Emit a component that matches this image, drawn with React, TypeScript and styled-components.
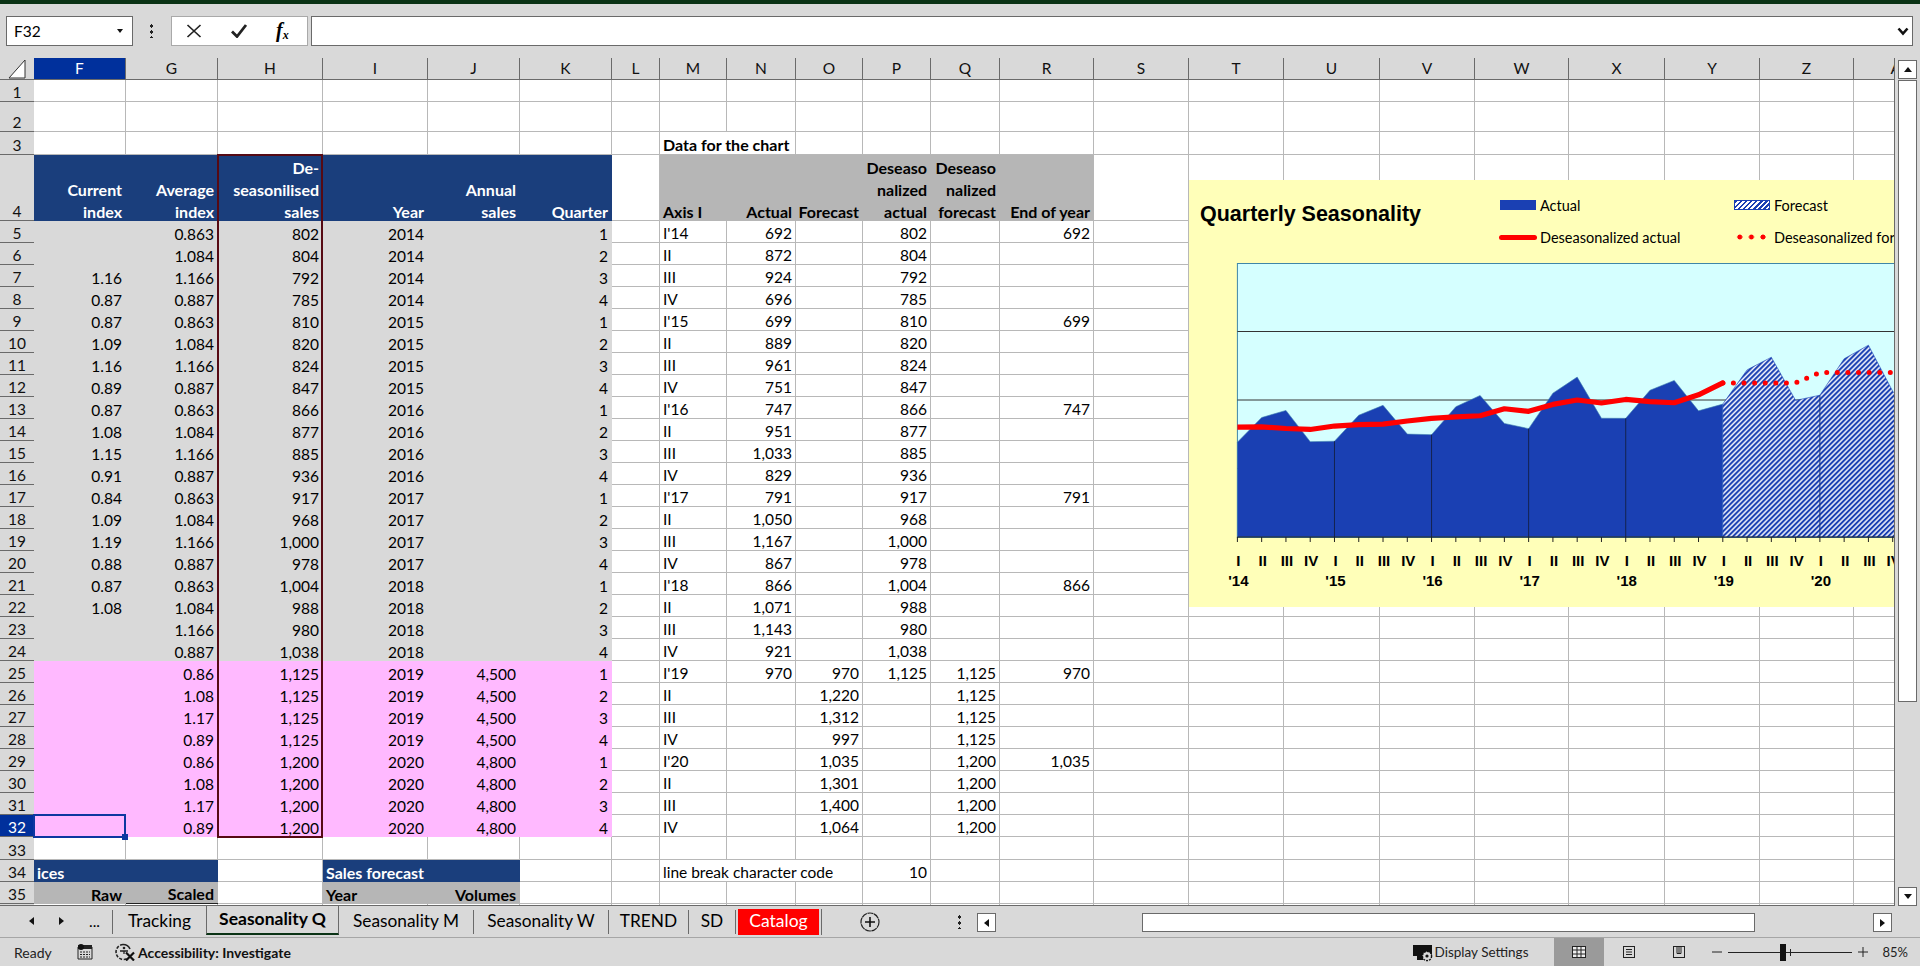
import type { ComponentProps } from "react";
import styled, { createGlobalStyle } from "styled-components";

const GlobalStyle = createGlobalStyle`
  html, body {
    margin: 0;
    padding: 0;
    width: 1920px;
    height: 966px;
    overflow: hidden;
    background: #d9d9d9;
  }
`;

const Page = styled.div`
  width: 1920px;
  height: 966px;
  display: flex;
  flex-direction: column;
  overflow: hidden;
  font-family: Lato, "Open Sans", sans-serif;
  color: #000;
`;

const TitleEdge = styled.div`
  height: 4px;
  background: #0a3315;
`;

/* formula bar */
const FormulaBar = styled.div`
  height: 54px;
  box-sizing: border-box;
  padding: 12px 7px 0 6px;
  display: flex;
  align-items: flex-start;
`;

const NameBox = styled.div`
  width: 127px;
  height: 30px;
  box-sizing: border-box;
  background: #fff;
  border: 1px solid #6a6a6a;
  display: flex;
  align-items: center;
  justify-content: space-between;
  padding: 0 9px 0 7px;
  font-size: 15.5px;
`;

const Handle = styled.div`
  width: 3px;
  height: 15px;
  background-image: radial-gradient(circle, #222 1.6px, transparent 1.7px);
  background-size: 3px 6px;
`;

const FormulaHandle = styled(Handle)`
  margin: 7px 18px 0 17px;
`;

const ButtonGroup = styled.div`
  width: 137px;
  height: 30px;
  box-sizing: border-box;
  background: #fff;
  border: 1px solid #a9a9a9;
  display: flex;
  align-items: center;
  gap: 28px;
  padding-left: 14px;
  margin-right: 3px;
`;

const FxLabel = styled.span`
  font-family: "Liberation Serif", serif;
  font-style: italic;
  font-weight: 700;
  font-size: 20px;
  & > sub {
    font-size: 12px;
    vertical-align: -2px;
  }
`;

const FormulaInput = styled.div`
  flex: 1;
  height: 30px;
  box-sizing: border-box;
  background: #fff;
  border: 1px solid #6a6a6a;
  display: flex;
  align-items: center;
  justify-content: flex-end;
  padding-right: 3px;
`;

/* sheet */
const Workspace = styled.div`
  height: 848px;
  display: flex;
`;

const Sheet = styled.div`
  position: relative;
  width: 1895px;
  box-sizing: border-box;
  overflow: hidden;
  border-right: 1px solid #6a6a6a;
  border-bottom: 1px solid #6a6a6a;
  background: #fff;
  display: grid;
  grid-template-columns: 34px 92px 92px 105px 105px 92px 92px 48px 67px 69px 67px 68px 69px 94px 95px 95px 96px 95px 94px 96px 95px 94px 95px;
  grid-template-rows: 22px 22px 30px 23px 66px repeat(28, 22px) 23px 22px 22px 22px;
  align-content: start;
  font-size: 15.5px;
`;

const Corner = styled.div`
  background: #d9d9d9;
  border-bottom: 1px solid #6a6a6a;
  display: flex;
  align-items: center;
  justify-content: center;
`;

const ColHeader = styled.div<{ $selected?: boolean }>`
  box-sizing: border-box;
  background: ${(p) => (p.$selected ? "#00309c" : "#d9d9d9")};
  color: ${(p) => (p.$selected ? "#fff" : "#111")};
  border-right: 1px solid #6a6a6a;
  border-bottom: 1px solid #6a6a6a;
  display: flex;
  align-items: center;
  justify-content: center;
  line-height: 21px;
`;

const RowHeader = styled.div<{ $selected?: boolean }>`
  box-sizing: border-box;
  background: ${(p) => (p.$selected ? "#00309c" : "#d9d9d9")};
  color: ${(p) => (p.$selected ? "#fff" : "#111")};
  border-bottom: 1px solid #6a6a6a;
  display: flex;
  align-items: flex-end;
  justify-content: center;
  line-height: 18px;
`;

type Tone = "plain" | "gray" | "pink" | "blue" | "silver";

const toneBg: Record<Tone, string> = {
  plain: "#fff",
  gray: "#d9d9d9",
  pink: "#ffb9ff",
  blue: "#1a3e7c",
  silver: "#b6b6b6",
};

const CellBox = styled.div<{
  $tone?: Tone;
  $left?: boolean;
  $bold?: boolean;
  $span?: number;
  $rule?: boolean;
}>`
  box-sizing: border-box;
  min-width: 0;
  grid-column: span ${(p) => p.$span ?? 1};
  background: ${(p) => toneBg[p.$tone ?? "plain"]};
  color: ${(p) => (p.$tone === "blue" ? "#fff" : "#000")};
  font-weight: ${(p) => (p.$bold ? 700 : 400)};
  font-size: ${(p) => (p.$bold ? "16px" : "15.5px")};
  border-right: ${(p) => (p.$tone && p.$tone !== "plain" ? "0" : "1px solid #b8b8b8")};
  border-bottom: ${(p) =>
    p.$rule ? "1px solid #222" : p.$tone && p.$tone !== "plain" ? "0" : "1px solid #b8b8b8"};
  display: flex;
  align-items: flex-end;
  justify-content: ${(p) => (p.$left ? "flex-start" : "flex-end")};
  text-align: ${(p) => (p.$left ? "left" : "right")};
  padding: ${(p) => (p.$left ? "0 0 0 3px" : p.$tone && p.$tone !== "plain" ? "0 4px 0 0" : "0 3px 0 0")};
  line-height: 22px;
  white-space: pre;
`;

const Value = styled.span`
  position: relative;
  top: 2px;
`;

const Cell = ({ children, ...rest }: ComponentProps<typeof CellBox>) => (
  <CellBox {...rest}>
    <Value>{children}</Value>
  </CellBox>
);

const ColumnOutline = styled.div`
  position: absolute;
  grid-column: 4 / 5;
  grid-row: 5 / 34;
  inset: -1px 0 -1px -1px;
  border: 2px solid #560a14;
  pointer-events: none;
`;

const ActiveCell = styled.div`
  position: absolute;
  grid-column: 2 / 3;
  grid-row: 33 / 34;
  inset: -1px 0 -1px -1px;
  border: 2.5px solid #0d37a0;
  pointer-events: none;
  &::after {
    content: "";
    position: absolute;
    right: -4px;
    bottom: -4px;
    width: 6px;
    height: 6px;
    background: #0d37a0;
  }
`;

/* chart that floats over the sheet */
const ChartPanel = styled.div`
  position: absolute;
  left: 1189px;
  top: 122px;
  width: 800px;
  height: 427px;
  background: #ffffb9;
`;

const ChartHeader = styled.div`
  height: 83px;
  display: flex;
  align-items: flex-start;
`;

const ChartTitle = styled.div`
  width: 300px;
  flex: none;
  padding: 20px 0 0 11px;
  box-sizing: border-box;
  margin-right: 11px;
  font-family: "Liberation Sans", Arial, sans-serif;
  font-weight: 700;
  font-size: 21.5px;
  line-height: 28px;
  white-space: nowrap;
`;

const Legend = styled.div`
  padding-top: 9px;
  display: grid;
  grid-template-columns: 234px 240px;
  grid-auto-rows: 32px;
`;

const LegendItem = styled.div`
  display: flex;
  align-items: center;
  gap: 4px;
  font-size: 14.5px;
  white-space: nowrap;
`;

const AreaSwatch = styled.div<{ $hatch?: boolean }>`
  width: 36px;
  height: 10px;
  box-sizing: border-box;
  border: 1px solid #1a40b3;
  background: ${(p) =>
    p.$hatch
      ? "repeating-linear-gradient(135deg, #1a40b3 0 2.1px, #fff 2.1px 3.54px)"
      : "#1a40b3"};
`;

const LineSwatch = styled.div`
  width: 38px;
  height: 5px;
  margin-left: -1px;
  margin-right: -1px;
  border-radius: 3px;
  background: #ff0000;
`;

const DotSwatch = styled.div`
  width: 36px;
  height: 6px;
  background-image: radial-gradient(circle, #ff0000 2.3px, transparent 2.7px);
  background-size: 11.6px 6px;
`;

const PlotSvg = styled.svg`
  display: block;
`;

const AxisText = styled.text`
  font-family: "Liberation Sans", Arial, sans-serif;
  font-weight: 700;
  font-size: 15px;
  text-anchor: middle;
  fill: #000;
`;

/* vertical scrollbar */
const VScroll = styled.div`
  flex: 1;
  box-sizing: border-box;
  padding: 2px 3px 0 3px;
  display: flex;
  flex-direction: column;
  align-items: stretch;
`;

const ScrollButton = styled.div`
  width: 19px;
  height: 19px;
  box-sizing: border-box;
  background: #fff;
  border: 1px solid #6a6a6a;
  display: flex;
  align-items: center;
  justify-content: center;
  flex: none;
`;

const VThumb = styled.div`
  height: 622px;
  margin-top: 1px;
  box-sizing: border-box;
  background: #fff;
  border: 1px solid #6a6a6a;
`;

const VSpacer = styled.div`
  flex: 1;
`;

const Triangle = styled.div<{ $dir: "up" | "down" | "left" | "right"; $size?: number }>`
  width: 0;
  height: 0;
  ${(p) => {
    const s = p.$size ?? 4;
    const side = `${s}px solid transparent`;
    const solid = `${s + 1}px solid #111`;
    if (p.$dir === "up") return `border-left:${side};border-right:${side};border-bottom:${solid};`;
    if (p.$dir === "down") return `border-left:${side};border-right:${side};border-top:${solid};`;
    if (p.$dir === "left") return `border-top:${side};border-bottom:${side};border-right:${solid};`;
    return `border-top:${side};border-bottom:${side};border-left:${solid};`;
  }}
`;

/* sheet tabs */
const TabBar = styled.div`
  height: 32px;
  box-sizing: border-box;
  border-bottom: 1px solid #a6a6a6;
  display: flex;
  align-items: flex-start;
`;

const TabNav = styled.div`
  width: 112px;
  height: 30px;
  box-sizing: border-box;
  padding: 0 12px 0 29px;
  display: flex;
  align-items: center;
  justify-content: space-between;
  font-size: 15.5px;
`;

const Tabs = styled.div`
  display: flex;
  align-items: flex-start;
  height: 31px;
`;

const Tab = styled.div<{ $w: number; $active?: boolean; $red?: boolean }>`
  width: ${(p) => p.$w}px;
  box-sizing: border-box;
  height: ${(p) => (p.$active ? "29px" : p.$red ? "26px" : "24px")};
  margin-top: ${(p) => (p.$active ? "0" : p.$red ? "3px" : "4px")};
  display: flex;
  align-items: center;
  justify-content: center;
  padding-bottom: ${(p) => (p.$active ? "2px" : p.$red ? "4px" : "4px")};
  font-size: ${(p) => (p.$active || p.$red ? "17.5px" : "17.3px")};
  font-weight: ${(p) => (p.$active ? 700 : 400)};
  white-space: nowrap;
  background: ${(p) => (p.$red ? "#ff0000" : "#d9d9d9")};
  color: ${(p) => (p.$red ? "#fff" : "#000")};
  ${(p) =>
    p.$active
      ? "border-left: 1px solid #6a6a6a; border-right: 1px solid #6a6a6a; border-bottom: 2px solid #0a3315; margin-left: -1px;"
      : p.$red
      ? "margin-left: 2px; box-shadow: 2px 0 0 #d9d9d9, 3px 0 0 #6a6a6a;"
      : "border-right: 1px solid #6a6a6a;"}
`;

const FirstTabEdge = styled.div`
  width: 1px;
  height: 24px;
  margin-top: 4px;
  background: #6a6a6a;
`;

const AddSheet = styled.div`
  margin: 6px 0 0 41px;
  width: 20px;
  height: 20px;
  flex: none;
`;

const TabHandle = styled(Handle)`
  margin: 8px 16px 0 78px;
  flex: none;
`;

const HScroll = styled.div`
  display: flex;
  align-items: flex-start;
  padding-top: 7px;
`;

const HTrack = styled.div`
  width: 877px;
  height: 19px;
  padding-left: 146px;
  box-sizing: border-box;
`;

const HThumb = styled.div`
  width: 613px;
  height: 19px;
  box-sizing: border-box;
  background: #fff;
  border: 1px solid #6a6a6a;
`;

/* status bar */
const StatusBar = styled.div`
  height: 28px;
  display: flex;
  align-items: center;
  font-size: 14px;
  color: #222;
`;

const Ready = styled.span`
  margin-left: 14px;
  width: 63px;
`;

const StatusIcon = styled.svg`
  flex: none;
  display: block;
`;

const AccessIcon = styled(StatusIcon)`
  margin-left: 21px;
`;

const AccessText = styled.span`
  margin-left: 2px;
  font-weight: 700;
  color: #111;
`;

const StatusRight = styled.div`
  margin-left: auto;
  height: 28px;
  display: flex;
  align-items: center;
`;

const DisplayText = styled.span`
  margin: 0 25px 0 2px;
  font-size: 13.5px;
`;

const ViewButton = styled.div<{ $on?: boolean }>`
  width: 50px;
  height: 28px;
  background: ${(p) => (p.$on ? "#9a9a9a" : "transparent")};
  display: flex;
  align-items: center;
  justify-content: center;
`;

const ZoomTrack = styled.div`
  position: relative;
  width: 124px;
  height: 1px;
  margin: 0 6px;
  background: #222;
`;

const ZoomThumb = styled.div`
  position: absolute;
  left: 52px;
  top: -8px;
  width: 6px;
  height: 17px;
  background: #111;
`;

const ZoomTick = styled.div`
  position: absolute;
  left: 62px;
  top: -3px;
  width: 1px;
  height: 7px;
  background: #222;
`;

const ZoomSign = styled.svg`
  flex: none;
  display: block;
`;

const ZoomMinus = styled(ZoomSign)`
  margin-left: 8px;
`;

const ZoomPct = styled.span`
  margin: 0 12px 0 15px;
  font-size: 13px;
`;

const columns = ["F", "G", "H", "I", "J", "K", "L", "M", "N", "O", "P", "Q", "R", "S", "T", "U", "V", "W", "X", "Y", "Z", "AA"];

// F G H I J K | M N O P Q R, one line per sheet row from 5 to 32
const rows: string[][] = [
  ["", "0.863", "802", "2014", "", "1", "I'14", "692", "", "802", "", "692"],
  ["", "1.084", "804", "2014", "", "2", "II", "872", "", "804", "", ""],
  ["1.16", "1.166", "792", "2014", "", "3", "III", "924", "", "792", "", ""],
  ["0.87", "0.887", "785", "2014", "", "4", "IV", "696", "", "785", "", ""],
  ["0.87", "0.863", "810", "2015", "", "1", "I'15", "699", "", "810", "", "699"],
  ["1.09", "1.084", "820", "2015", "", "2", "II", "889", "", "820", "", ""],
  ["1.16", "1.166", "824", "2015", "", "3", "III", "961", "", "824", "", ""],
  ["0.89", "0.887", "847", "2015", "", "4", "IV", "751", "", "847", "", ""],
  ["0.87", "0.863", "866", "2016", "", "1", "I'16", "747", "", "866", "", "747"],
  ["1.08", "1.084", "877", "2016", "", "2", "II", "951", "", "877", "", ""],
  ["1.15", "1.166", "885", "2016", "", "3", "III", "1,033", "", "885", "", ""],
  ["0.91", "0.887", "936", "2016", "", "4", "IV", "829", "", "936", "", ""],
  ["0.84", "0.863", "917", "2017", "", "1", "I'17", "791", "", "917", "", "791"],
  ["1.09", "1.084", "968", "2017", "", "2", "II", "1,050", "", "968", "", ""],
  ["1.19", "1.166", "1,000", "2017", "", "3", "III", "1,167", "", "1,000", "", ""],
  ["0.88", "0.887", "978", "2017", "", "4", "IV", "867", "", "978", "", ""],
  ["0.87", "0.863", "1,004", "2018", "", "1", "I'18", "866", "", "1,004", "", "866"],
  ["1.08", "1.084", "988", "2018", "", "2", "II", "1,071", "", "988", "", ""],
  ["", "1.166", "980", "2018", "", "3", "III", "1,143", "", "980", "", ""],
  ["", "0.887", "1,038", "2018", "", "4", "IV", "921", "", "1,038", "", ""],
  ["", "0.86", "1,125", "2019", "4,500", "1", "I'19", "970", "970", "1,125", "1,125", "970"],
  ["", "1.08", "1,125", "2019", "4,500", "2", "II", "", "1,220", "", "1,125", ""],
  ["", "1.17", "1,125", "2019", "4,500", "3", "III", "", "1,312", "", "1,125", ""],
  ["", "0.89", "1,125", "2019", "4,500", "4", "IV", "", "997", "", "1,125", ""],
  ["", "0.86", "1,200", "2020", "4,800", "1", "I'20", "", "1,035", "", "1,200", "1,035"],
  ["", "1.08", "1,200", "2020", "4,800", "2", "II", "", "1,301", "", "1,200", ""],
  ["", "1.17", "1,200", "2020", "4,800", "3", "III", "", "1,400", "", "1,200", ""],
  ["", "0.89", "1,200", "2020", "4,800", "4", "IV", "", "1,064", "", "1,200", ""],
];

const actual = [692, 872, 924, 696, 699, 889, 961, 751, 747, 951, 1033, 829, 791, 1050, 1167, 867, 866, 1071, 1143, 921, 970];
const forecast = [970, 1220, 1312, 997, 1035, 1301, 1400, 1064];
const deseasonalized = [802, 804, 792, 785, 810, 820, 824, 847, 866, 877, 885, 936, 917, 968, 1000, 978, 1004, 988, 980, 1038, 1125];
const deseasonalizedForecast = [1125, 1125, 1125, 1125, 1200, 1200, 1200, 1200, 1200];

const PLOT_LEFT = 48.4;
const PLOT_BOTTOM = 274;
const X = (i: number) => PLOT_LEFT + i * 24.27;
const Y = (v: number) => PLOT_BOTTOM - v * 0.137;
const points = (values: number[], from = 0) => values.map((v, i) => `${X(i + from)},${Y(v)}`).join(" ");

const Blanks = ({ count }: { count: number }) => (
  <>
    {Array.from({ length: count }, (_, i) => (
      <CellBox key={i} />
    ))}
  </>
);

const Chart = () => {
  const quarters = ["I", "II", "III", "IV"];
  const forecastEnd = X(forecast.length + 19);
  return (
    <ChartPanel>
      <ChartHeader>
        <ChartTitle>Quarterly Seasonality</ChartTitle>
        <Legend>
          <LegendItem>
            <AreaSwatch />
            Actual
          </LegendItem>
          <LegendItem>
            <AreaSwatch $hatch />
            Forecast
          </LegendItem>
          <LegendItem>
            <LineSwatch />
            Deseasonalized actual
          </LegendItem>
          <LegendItem>
            <DotSwatch />
            Deseasonalized forecast
          </LegendItem>
        </Legend>
      </ChartHeader>
      <PlotSvg width={800} height={344}>
        <defs>
          <pattern id="hatch" width="3.54" height="3.54" patternUnits="userSpaceOnUse" patternTransform="rotate(45)">
            <rect width="3.54" height="3.54" fill="#fff" />
            <rect width="2.1" height="3.54" fill="#1a40b3" />
          </pattern>
          <clipPath id="plot">
            <rect x={PLOT_LEFT} y="0" width="760" height="300" />
          </clipPath>
        </defs>
        <rect x={PLOT_LEFT} y="0.5" width="760" height={PLOT_BOTTOM} fill="#d5ffff" stroke="#3f86a8" />
        {[1500, 1000, 500].map((v) => (
          <line key={v} x1={PLOT_LEFT} x2="800" y1={Y(v)} y2={Y(v)} stroke="#333" strokeWidth="1" />
        ))}
        <polygon
          points={`${X(0)},${PLOT_BOTTOM} ${points(actual)} ${X(20)},${PLOT_BOTTOM}`}
          fill="#1a40b3"
          stroke="#3f7fb0"
          strokeWidth="0.6"
        />
        <polygon
          points={`${X(20)},${PLOT_BOTTOM} ${points(forecast, 20)} ${forecastEnd + 8},${Y(1000)} ${forecastEnd + 8},${PLOT_BOTTOM}`}
          fill="url(#hatch)"
          stroke="#1a40b3"
          strokeWidth="0.6"
        />
        {[4, 8, 12, 16].map((q) => (
          <line key={q} x1={X(q)} x2={X(q)} y1={Y(actual[q])} y2={PLOT_BOTTOM} stroke="#14224f" />
        ))}
        <line x1={X(24)} x2={X(24)} y1={Y(forecast[4])} y2={PLOT_BOTTOM} stroke="#14307f" />
        <line x1={PLOT_LEFT} x2="800" y1={PLOT_BOTTOM} y2={PLOT_BOTTOM} stroke="#222" />
        {Array.from({ length: 29 }, (_, i) => (
          <line key={i} x1={X(i)} x2={X(i)} y1={PLOT_BOTTOM} y2={PLOT_BOTTOM + 5} stroke="#222" />
        ))}
        <g clipPath="url(#plot)">
          <polyline
            points={points(deseasonalized)}
            fill="none"
            stroke="#ff0000"
            strokeWidth="5.2"
            strokeLinejoin="round"
            strokeLinecap="round"
          />
        </g>
        <polyline
          points={points(deseasonalizedForecast, 20)}
          fill="none"
          stroke="#ff0000"
          strokeWidth="5"
          strokeLinecap="round"
          strokeDasharray="0 10.6"
        />
        {Array.from({ length: 28 }, (_, i) => (
          <AxisText key={i} x={X(i) + 1} y={302.5}>
            {quarters[i % 4]}
          </AxisText>
        ))}
        {[0, 1, 2, 3, 4, 5, 6].map((y) => (
          <AxisText key={y} x={X(y * 4) + 1} y={322.5}>
            {`'${14 + y}`}
          </AxisText>
        ))}
      </PlotSvg>
    </ChartPanel>
  );
};

const App = () => {
  return (
    <>
      <GlobalStyle />
      <Page>
        <TitleEdge />
        <FormulaBar>
          <NameBox>
            F32
            <Triangle $dir="down" $size={3} />
          </NameBox>
          <FormulaHandle />
          <ButtonGroup>
            <svg width="16" height="14" viewBox="0 0 16 14">
              <path d="M1.5 1 L14.5 13 M14.5 1 L1.5 13" stroke="#222" strokeWidth="1.7" fill="none" />
            </svg>
            <svg width="18" height="14" viewBox="0 0 18 14">
              <path d="M2 7.5 L7 12.5 L16 1" stroke="#222" strokeWidth="2.8" fill="none" />
            </svg>
            <FxLabel>
              f<sub>x</sub>
            </FxLabel>
          </ButtonGroup>
          <FormulaInput>
            <svg width="12" height="9" viewBox="0 0 12 9">
              <path d="M1.5 1.5 L6 6.5 L10.5 1.5" stroke="#111" strokeWidth="2.6" fill="none" />
            </svg>
          </FormulaInput>
        </FormulaBar>

        <Workspace>
          <Sheet>
            <Corner>
              <svg width="18" height="20" viewBox="0 0 18 20">
                <path d="M1 19 L17 1 V19 Z" fill="#fff" stroke="#333" />
              </svg>
            </Corner>
            {columns.map((c, i) => (
              <ColHeader key={c} $selected={i === 0}>
                {c}
              </ColHeader>
            ))}

            <RowHeader>1</RowHeader>
            <Blanks count={22} />
            <RowHeader>2</RowHeader>
            <Blanks count={22} />
            <RowHeader>3</RowHeader>
            <Blanks count={7} />
            <Cell $span={2} $left $bold>
              Data for the chart
            </Cell>
            <Blanks count={13} />

            <RowHeader>4</RowHeader>
            <Cell $tone="blue" $bold>{"Current\nindex"}</Cell>
            <Cell $tone="blue" $bold>{"Average\nindex"}</Cell>
            <Cell $tone="blue" $bold>{"De-\nseasonilised\nsales"}</Cell>
            <Cell $tone="blue" $bold>Year</Cell>
            <Cell $tone="blue" $bold>{"Annual\nsales"}</Cell>
            <Cell $tone="blue" $bold>Quarter</Cell>
            <CellBox />
            <Cell $tone="silver" $bold $left>Axis I</Cell>
            <Cell $tone="silver" $bold>Actual</Cell>
            <Cell $tone="silver" $bold>Forecast</Cell>
            <Cell $tone="silver" $bold>{"Deseaso\nnalized\nactual"}</Cell>
            <Cell $tone="silver" $bold>{"Deseaso\nnalized\nforecast"}</Cell>
            <Cell $tone="silver" $bold>End of year</Cell>
            <Blanks count={9} />

            {rows.map((r, i) => {
              const tone: Tone = i < 20 ? "gray" : "pink";
              const n = i + 5;
              return (
                <div key={n} style={{ display: "contents" }}>
                  <RowHeader $selected={n === 32}>{n}</RowHeader>
                  {r.slice(0, 6).map((v, c) => (
                    <Cell key={c} $tone={tone}>
                      {v}
                    </Cell>
                  ))}
                  <CellBox />
                  <Cell $left>{r[6]}</Cell>
                  {r.slice(7).map((v, c) => (
                    <Cell key={c}>{v}</Cell>
                  ))}
                  <Blanks count={9} />
                </div>
              );
            })}

            <RowHeader>33</RowHeader>
            <Blanks count={22} />

            <RowHeader>34</RowHeader>
            <Cell $tone="blue" $span={2} $left $bold>ices</Cell>
            <CellBox />
            <Cell $tone="blue" $span={2} $left $bold>Sales forecast</Cell>
            <Blanks count={2} />
            <Cell $span={3} $left>line break character code</Cell>
            <Cell>10</Cell>
            <Blanks count={11} />

            <RowHeader>35</RowHeader>
            <Cell $tone="silver" $bold>Raw</Cell>
            <Cell $tone="silver" $bold $rule>Scaled</Cell>
            <CellBox />
            <Cell $tone="silver" $bold $left>Year</Cell>
            <Cell $tone="silver" $bold>Volumes</Cell>
            <Blanks count={17} />

            <RowHeader />
            <Blanks count={22} />

            <ColumnOutline />
            <ActiveCell />
            <Chart />
          </Sheet>
          <VScroll>
            <ScrollButton>
              <Triangle $dir="up" />
            </ScrollButton>
            <VThumb />
            <VSpacer />
            <ScrollButton>
              <Triangle $dir="down" />
            </ScrollButton>
          </VScroll>
        </Workspace>

        <TabBar>
          <TabNav>
            <Triangle $dir="left" />
            <Triangle $dir="right" />
            <span>...</span>
          </TabNav>
          <Tabs>
            <FirstTabEdge />
            <Tab $w={94}>Tracking</Tab>
            <Tab $w={133} $active>Seasonality Q</Tab>
            <Tab $w={135}>Seasonality M</Tab>
            <Tab $w={135}>Seasonality W</Tab>
            <Tab $w={80}>TREND</Tab>
            <Tab $w={47}>SD</Tab>
            <Tab $w={81} $red>Catalog</Tab>
          </Tabs>
          <AddSheet>
            <svg width="20" height="20" viewBox="0 0 20 20">
              <circle cx="10" cy="10" r="9" fill="none" stroke="#222" strokeWidth="1.2" strokeDasharray="6 0.6" />
              <path d="M10 5 V15 M5 10 H15" stroke="#111" strokeWidth="1.6" />
            </svg>
          </AddSheet>
          <TabHandle />
          <HScroll>
            <ScrollButton>
              <Triangle $dir="left" />
            </ScrollButton>
            <HTrack>
              <HThumb />
            </HTrack>
            <ScrollButton>
              <Triangle $dir="right" />
            </ScrollButton>
          </HScroll>
        </TabBar>

        <StatusBar>
          <Ready>Ready</Ready>
          <StatusIcon width="16" height="16" viewBox="0 0 16 16">
            <path d="M1 3 H15 V15 H1 Z" fill="#d9d9d9" stroke="#222" />
            <rect x="1" y="1" width="14" height="4" fill="#222" />
            <circle cx="4" cy="3" r="3" fill="#111" />
            <path d="M3 8 H13 M3 10.5 H13 M3 13 H13" stroke="#222" strokeDasharray="2 1" />
          </StatusIcon>
          <AccessIcon width="22" height="18" viewBox="0 0 22 18">
            <path d="M9 1.5 A7.5 7.5 0 1 0 14 15" fill="none" stroke="#222" strokeWidth="1.6" strokeDasharray="3 1.6" />
            <path d="M9 1.5 A7.5 7.5 0 0 1 16 6" fill="none" stroke="#222" strokeWidth="1.6" />
            <circle cx="10" cy="5" r="1.3" fill="#222" />
            <path d="M6 8 H14 M10 8 V11" stroke="#222" strokeWidth="1.3" fill="none" />
            <path d="M12 9.5 L20 17.5 M20 9.5 L12 17.5" stroke="#111" strokeWidth="2.2" />
          </AccessIcon>
          <AccessText>Accessibility: Investigate</AccessText>
          <StatusRight>
            <StatusIcon width="20" height="20" viewBox="0 0 20 20">
              <rect x="0" y="3" width="19" height="11" fill="#111" />
              <rect x="4" y="14" width="6" height="4" fill="#111" />
              <circle cx="14" cy="14" r="4.6" fill="#d9d9d9" stroke="#111" strokeWidth="1.4" strokeDasharray="2 1" />
              <circle cx="14" cy="14" r="1.6" fill="#111" />
            </StatusIcon>
            <DisplayText>Display Settings</DisplayText>
            <ViewButton $on>
              <svg width="14" height="12" viewBox="0 0 14 12">
                <rect x="0.5" y="0.5" width="13" height="11" fill="#eee" stroke="#222" />
                <path d="M0.5 4 H13.5 M0.5 8 H13.5 M5 0.5 V11.5 M9 0.5 V11.5" stroke="#222" />
              </svg>
            </ViewButton>
            <ViewButton>
              <svg width="12" height="12" viewBox="0 0 12 12">
                <rect x="0.5" y="0.5" width="11" height="11" fill="none" stroke="#222" />
                <path d="M3 3.5 H9 M3 6 H9 M3 8.5 H9" stroke="#222" />
              </svg>
            </ViewButton>
            <ViewButton>
              <svg width="12" height="12" viewBox="0 0 12 12">
                <rect x="0.5" y="0.5" width="11" height="11" fill="none" stroke="#222" />
                <path d="M4 0.5 V7.5 H8 V0.5 M6 0.5 V7.5" fill="none" stroke="#222" />
              </svg>
            </ViewButton>
            <ZoomMinus width="10" height="10" viewBox="0 0 10 10">
              <path d="M0 5 H10" stroke="#222" />
            </ZoomMinus>
            <ZoomTrack>
              <ZoomThumb />
              <ZoomTick />
            </ZoomTrack>
            <ZoomSign width="10" height="10" viewBox="0 0 10 10">
              <path d="M0 5 H10 M5 0 V10" stroke="#222" />
            </ZoomSign>
            <ZoomPct>85%</ZoomPct>
          </StatusRight>
        </StatusBar>
      </Page>
    </>
  );
};

export default App;
